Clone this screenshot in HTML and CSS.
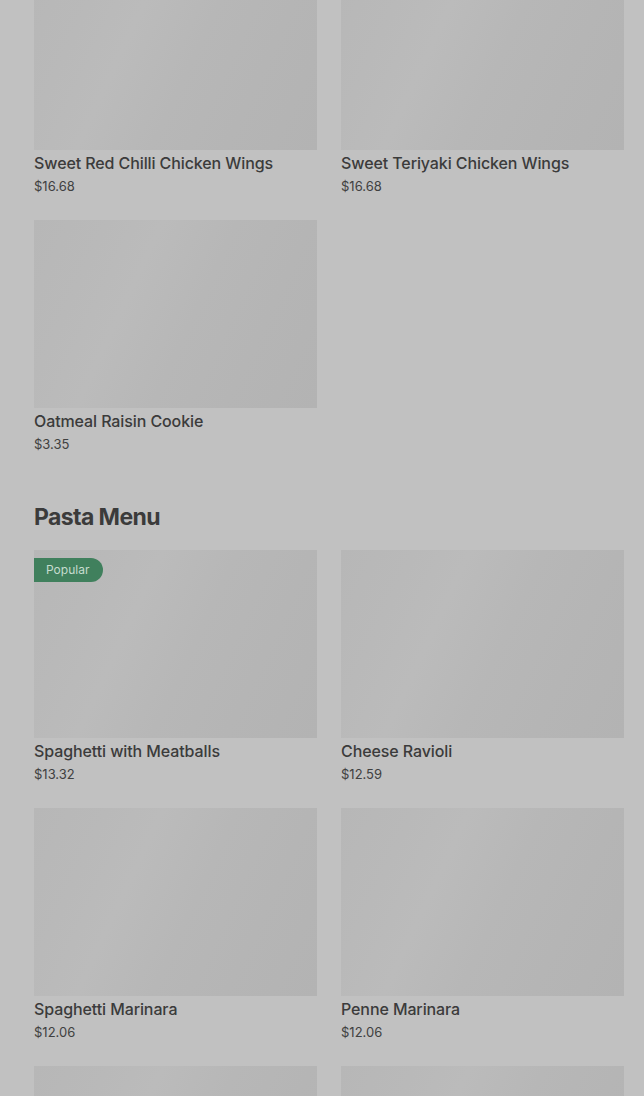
FILE: index.html
```html
<!DOCTYPE html>
<html>
<head>
<meta charset="utf-8">
<link rel="stylesheet" href="styles.css">
</head>
<body>
<main class="page">
  <section class="section first">
    <div class="grid">
      <div class="card">
        <div class="thumb"></div>
        <div class="name">Sweet Red Chilli Chicken Wings</div>
        <div class="price">$16.68</div>
      </div>
      <div class="card">
        <div class="thumb"></div>
        <div class="name">Sweet Teriyaki Chicken Wings</div>
        <div class="price">$16.68</div>
      </div>
      <div class="card">
        <div class="thumb"></div>
        <div class="name">Oatmeal Raisin Cookie</div>
        <div class="price">$3.35</div>
      </div>
    </div>
  </section>
  <section class="section">
    <h2 class="heading">Pasta Menu</h2>
    <div class="grid">
      <div class="card">
        <div class="thumb"><span class="badge">Popular</span></div>
        <div class="name">Spaghetti with Meatballs</div>
        <div class="price">$13.32</div>
      </div>
      <div class="card">
        <div class="thumb"></div>
        <div class="name">Cheese Ravioli</div>
        <div class="price">$12.59</div>
      </div>
      <div class="card">
        <div class="thumb"></div>
        <div class="name">Spaghetti Marinara</div>
        <div class="price">$12.06</div>
      </div>
      <div class="card">
        <div class="thumb"></div>
        <div class="name">Penne Marinara</div>
        <div class="price">$12.06</div>
      </div>
      <div class="card">
        <div class="thumb"></div>
      </div>
      <div class="card">
        <div class="thumb"></div>
      </div>
    </div>
  </section>
</main>
</body>
</html>
```
FILE: styles.css
```css
html, body {
  margin: 0;
  padding: 0;
  background: #c1c1c1;
  overflow: hidden;
}
body {
  font-family: Inter, "Noto Sans", sans-serif;
  color: #3b3b3b;
}
.page {
  padding: 0 20px 0 34px;
  margin-top: -38px;
}
.grid {
  display: grid;
  grid-template-columns: 283px 283px;
  column-gap: 24px;
  row-gap: 22px;
}
.card {
  display: flex;
  flex-direction: column;
}
.thumb {
  position: relative;
  height: 188px;
  background: linear-gradient(115deg, #b7b7b7 0%, #b9b9b9 20%, #bbbbbb 35%, #b7b7b7 55%, #b5b5b5 75%, #b3b3b3 100%);
}
.badge {
  position: absolute;
  left: 0;
  top: 8px;
  height: 24px;
  line-height: 24px;
  padding: 0 14px 0 12px;
  background: #40805d;
  color: #c6dccf;
  font-size: 12px;
  border-radius: 0 12px 12px 0;
}
.name {
  margin-top: 2px;
  font-size: 16px;
  line-height: 22px;
  font-weight: 500;
  letter-spacing: -0.1px;
}
.price {
  font-size: 13px;
  line-height: 24px;
  color: #404040;
}
.heading {
  margin: 45px 0 17px;
  font-size: 23px;
  line-height: 32px;
  font-weight: 700;
  letter-spacing: -0.6px;
}
```
